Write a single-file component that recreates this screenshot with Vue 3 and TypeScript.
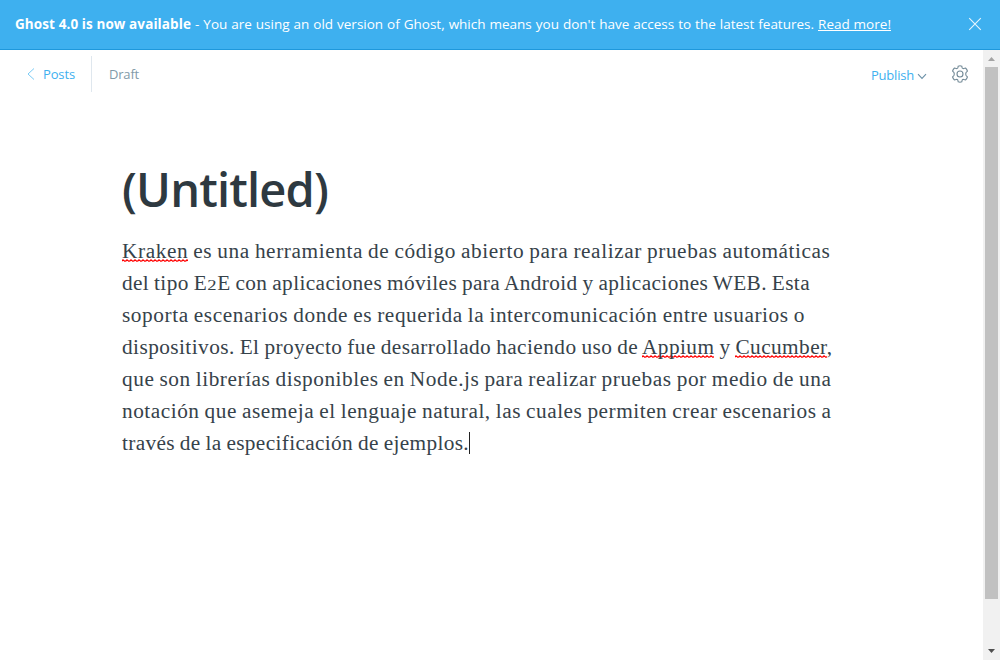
<script setup lang="ts">
interface Part {
  text: string
  kind?: 'misspelt' | 'figure'
}
interface Line {
  width: number
  parts: Part[]
}

const lines: Line[] = [
  { width: 708.5, parts: [{ text: 'Kraken', kind: 'misspelt' }, { text: ' es una herramienta de código abierto para realizar pruebas automáticas' }] },
  { width: 688, parts: [{ text: 'del tipo E' }, { text: '2', kind: 'figure' }, { text: 'E con aplicaciones móviles para Android y aplicaciones WEB. Esta' }] },
  { width: 683, parts: [{ text: 'soporta escenarios donde es requerida la intercomunicación entre usuarios o' }] },
  {
    width: 710.5,
    parts: [
      { text: 'dispositivos. El proyecto fue desarrollado haciendo uso de ' },
      { text: 'Appium', kind: 'misspelt' },
      { text: ' y ' },
      { text: 'Cucumber', kind: 'misspelt' },
      { text: ',' },
    ],
  },
  { width: 709.5, parts: [{ text: 'que son librerías disponibles en Node.js para realizar pruebas por medio de una' }] },
  { width: 709.5, parts: [{ text: 'notación que asemeja el lenguaje natural, las cuales permiten crear escenarios a' }] },
  { width: 347, parts: [{ text: 'través de la especificación de ejemplos.' }] },
]

// Tracks the text so that it sets to the given measure in pixels.
const vFit = {
  mounted(el: HTMLElement, binding: { value: number }) {
    const count = (el.textContent ?? '').length
    const natural = el.getBoundingClientRect().width
    el.style.letterSpacing = `${(binding.value - natural) / count}px`
  },
}
</script>

<template>
  <div class="app">
    <header class="banner">
      <p class="notice">
        <b v-fit="176">Ghost 4.0 is now available</b><span class="message" v-fit="627"> - You are using an old version of Ghost, which means you don't have access to the latest features. </span><a v-fit="73">Read more!</a>
      </p>
      <svg class="close" width="14" height="14" viewBox="0 0 14 14"><path d="M1.2 1.2 12.8 12.8M12.8 1.2 1.2 12.8" /></svg>
    </header>
    <div class="body">
      <main class="editor">
        <nav class="toolbar">
          <a class="back">
            <svg width="8" height="12" viewBox="0 0 8 12"><path d="M7 .5 1 6l6 5.5" /></svg>
            <span v-fit="32">Posts</span>
          </a>
          <span class="status"><span v-fit="30">Draft</span></span>
          <a class="publish">
            <span v-fit="43">Publish</span>
            <svg width="10" height="7" viewBox="0 0 10 7"><path d="M1 1.2 5 5.4 9 1.2" /></svg>
          </a>
          <svg class="gear" width="18" height="18" viewBox="0 0 18 18">
            <circle cx="9" cy="9" r="3" />
            <path d="M7.2 1.2Q9 .4 10.8 1.2L11.2 3Q11.8 3.8 12.8 3.5L14.5 3Q15.9 4.2 16.4 6L15.1 7.5Q14.4 9 15.1 10.5L16.4 12Q15.9 13.8 14.5 15L12.8 14.5Q11.8 14.2 11.2 15L10.8 16.8Q9 17.6 7.2 16.8L6.8 15Q6.2 14.2 5.2 14.5L3.5 15Q2.1 13.8 1.6 12L2.9 10.5Q3.6 9 2.9 7.5L1.6 6Q2.1 4.2 3.5 3L5.2 3.5Q6.2 3.8 6.8 3Z" />
          </svg>
        </nav>
        <article class="post">
          <h1><span v-fit="206">(Untitled)</span></h1>
          <div class="text">
            <div v-for="(line, i) in lines" :key="i" class="line">
              <span v-fit="line.width"><span v-for="(part, j) in line.parts" :key="j" :class="part.kind">{{ part.text }}</span></span><i v-if="i === lines.length - 1" class="caret"></i>
            </div>
          </div>
        </article>
      </main>
      <aside class="scrollbar">
        <svg width="17" height="17" viewBox="0 0 17 17"><path d="M5 11h7L8.5 7z" fill="#a3a3a3" /></svg>
        <div class="thumb"></div>
        <svg class="down" width="17" height="17" viewBox="0 0 17 17"><path d="M5 6h7L8.5 10z" fill="#505050" /></svg>
      </aside>
    </div>
  </div>
</template>

<style>
body {
  margin: 0;
  overflow: hidden;
}
</style>

<style scoped>
.app {
  width: 1000px;
  height: 660px;
  display: flex;
  flex-direction: column;
  background: #fff;
  font: 13px/20px "Open Sans", "Noto Sans", sans-serif;
  white-space: pre;
}
svg {
  display: block;
  fill: none;
}
.banner {
  box-sizing: border-box;
  height: 50px;
  flex: none;
  display: flex;
  align-items: center;
  justify-content: space-between;
  padding: 0 18px 1px 15px;
  background: #3eb0ef;
  border-bottom: 1px solid #1e98dc;
  color: #fff;
}
.notice {
  display: flex;
  margin: 0;
  font-size: 13.5px;
}
.message {
  word-spacing: 0.5px;
}
.notice a {
  text-decoration: underline;
  text-underline-offset: 1px;
}
.close {
  stroke: #e6f5fd;
  stroke-width: 1.1;
}
.body {
  flex: 1;
  display: flex;
  min-height: 0;
}
.editor {
  flex: 1;
}
.toolbar {
  height: 48px;
  display: flex;
  align-items: center;
  padding: 0 14px 0 27px;
}
.back {
  box-sizing: border-box;
  width: 65px;
  height: 36px;
  display: flex;
  align-items: center;
  gap: 8px;
  border-right: 1px solid #dfe7ee;
  color: #3eb0ef;
}
.back svg {
  stroke: #7acbf5;
  stroke-width: 1;
}
.status {
  padding-left: 17px;
  color: #829aa8;
}
.publish {
  display: flex;
  align-items: center;
  gap: 3px;
  margin: 2px 24px 0 auto;
  color: #3eb0ef;
}
.publish svg {
  margin-top: 2px;
  stroke: #6c91a8;
  stroke-width: 1.1;
}
.gear {
  stroke: #738a97;
  stroke-width: 1.1;
}
.post {
  padding: 59px 0 0 122px;
}
h1 {
  margin: 0;
  height: 78px;
  font: 600 47px/64px "Open Sans", "Noto Sans", sans-serif;
  color: #2e3940;
}
.text {
  font: 21.3px/32px "Liberation Serif", serif;
  word-spacing: -0.8px;
  color: #36424a;
}
.line {
  height: 32px;
  display: flex;
  align-items: center;
}
.misspelt {
  background: url("data:image/svg+xml,%3Csvg xmlns='http://www.w3.org/2000/svg' width='4' height='3'%3E%3Cpath d='M-1 3 1 .8 3 2.4 5 .8' fill='none' stroke='%23f00' stroke-width='1.1'/%3E%3C/svg%3E") repeat-x left bottom 1px;
}
.figure {
  display: inline-block;
  font-size: 15.5px;
  line-height: 1;
  transform: scaleX(1.2);
  margin: 0 1px;
}
.caret {
  width: 1px;
  height: 22px;
  background: #222;
}
.scrollbar {
  width: 17px;
  display: flex;
  flex-direction: column;
  background: #f1f1f1;
}
.thumb {
  width: 13px;
  height: 532px;
  margin-left: 2px;
  background: #c1c1c1;
}
.down {
  margin-top: auto;
}
</style>
